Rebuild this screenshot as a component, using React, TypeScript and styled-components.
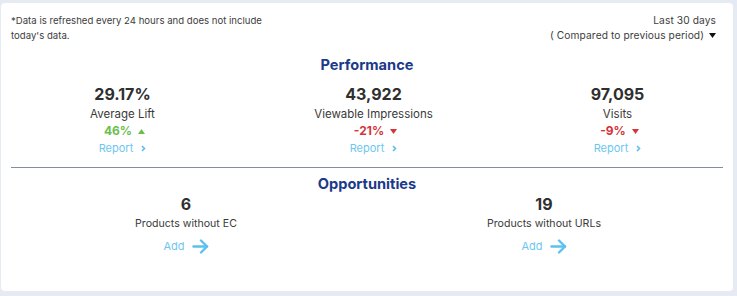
import React from 'react'
import styled, { createGlobalStyle } from 'styled-components'

const GlobalStyle = createGlobalStyle`
  html, body {
    margin: 0;
    padding: 0;
    background: #e6eaf3;
  }
  body {
    font-family: Inter, "Open Sans", sans-serif;
    color: #333;
  }
`

const Page = styled.div`
  padding: 3px 4px 5px 1px;
`

const Card = styled.div`
  background: #fff;
  border-radius: 4px;
  height: 288px;
  box-sizing: border-box;
  padding: 10px 10px 0 10px;
`

const Header = styled.div`
  display: flex;
  justify-content: space-between;
  align-items: flex-start;
  padding-right: 7px;
`

const Note = styled.div`
  font-size: 9.6px;
  line-height: 15px;
  color: #3d3d3d;
  max-width: 280px;
`

const Period = styled.div`
  font-size: 10.2px;
  line-height: 15px;
  color: #3d3d3d;
  text-align: right;
  letter-spacing: 0.1px;
`

const PeriodLine = styled.div`
  display: flex;
  justify-content: flex-end;
  align-items: center;
  gap: 5px;
`

const SectionTitle = styled.div<{ $top: number }>`
  margin-top: ${({ $top }) => $top}px;
  text-align: center;
  font-size: 14.6px;
  line-height: 20px;
  font-weight: 700;
  color: #1b3a88;
`

const Metrics = styled.div<{ $cols: string; $shift: number }>`
  display: grid;
  grid-template-columns: ${({ $cols }) => $cols};
  margin-left: ${({ $shift }) => $shift}px;
`

const Metric = styled.div`
  display: flex;
  flex-direction: column;
  align-items: center;
  text-align: center;
`

const Value = styled.div<{ $top: number }>`
  margin-top: ${({ $top }) => $top}px;
  font-size: 16px;
  line-height: 20px;
  font-weight: 700;
  color: #2f2f2f;
`

const Label = styled.div<{ $size: number; $lh: number; $top: number }>`
  margin-top: ${({ $top }) => $top}px;
  font-size: ${({ $size }) => $size}px;
  line-height: ${({ $lh }) => $lh}px;
  color: #3a3a3a;
  white-space: nowrap;
`

const Change = styled.div<{ $up: boolean }>`
  margin-top: 1px;
  display: flex;
  align-items: center;
  gap: 6px;
  font-size: 12px;
  line-height: 16px;
  font-weight: 700;
  color: ${({ $up }) => ($up ? '#69bf4c' : '#d5343d')};
  padding-left: 4px;
`

const LinkRow = styled.div<{ $gap: number; $lh: number; $top: number }>`
  margin-top: ${({ $top }) => $top}px;
  display: flex;
  align-items: center;
  gap: ${({ $gap }) => $gap}px;
  font-size: 11px;
  line-height: ${({ $lh }) => $lh}px;
  color: #6ec6f0;
  cursor: pointer;
`

const Divider = styled.hr`
  margin: 11px 0 0 0;
  border: none;
  border-top: 1px solid #858d9b;
  height: 0;
`

const Triangle = ({ up, color }: { up: boolean; color: string }) => (
  <svg width="7" height="5" viewBox="0 0 7 5">
    <polygon points={up ? '0,5 7,5 3.5,0' : '0,0 7,0 3.5,5'} fill={color} />
  </svg>
)

const Chevron = () => (
  <svg width="5" height="7" viewBox="0 0 5 7">
    <polyline points="1,1 3.5,3.5 1,6" fill="none" stroke="#5bbfee" strokeWidth="1.6" />
  </svg>
)

const Arrow = () => (
  <svg width="17" height="15" viewBox="0 0 17 15">
    <g fill="none" stroke="#5cc1f0" strokeWidth="2.4" strokeLinecap="round" strokeLinejoin="round">
      <line x1="1.5" y1="7.5" x2="15" y2="7.5" />
      <polyline points="9,1.5 15,7.5 9,13.5" />
    </g>
  </svg>
)

const performance = [
  { value: '29.17%', label: 'Average Lift', change: '46%', up: true },
  { value: '43,922', label: 'Viewable Impressions', change: '-21%', up: false },
  { value: '97,095', label: 'Visits', change: '-9%', up: false },
]

const opportunities = [
  { value: '6', label: 'Products without EC' },
  { value: '19', label: 'Products without URLs' },
]

export default function App() {
  return (
    <Page>
      <GlobalStyle />
      <Card>
        <Header>
          <Note>*Data is refreshed every 24 hours and does not include today's data.</Note>
          <Period>
            <PeriodLine>Last 30 days</PeriodLine>
            <PeriodLine>
              ( Compared to previous period)
              <Triangle up={false} color="#111" />
            </PeriodLine>
          </Period>
        </Header>

        <SectionTitle $top={12}>Performance</SectionTitle>
        <Metrics $cols="243px 259px 229px" $shift={-10}>
          {performance.map((m) => (
            <Metric key={m.label}>
              <Value $top={9}>{m.value}</Value>
              <Label $size={11.5} $lh={16} $top={2}>{m.label}</Label>
              <Change $up={m.up}>
                {m.change}
                <Triangle up={m.up} color={m.up ? '#69bf4c' : '#d5343d'} />
              </Change>
              <LinkRow $gap={8} $lh={16} $top={1}>
                Report
                <Chevron />
              </LinkRow>
            </Metric>
          ))}
        </Metrics>

        <Divider />

        <SectionTitle $top={6}>Opportunities</SectionTitle>
        <Metrics $cols="1fr 1fr" $shift={-4}>
          {opportunities.map((m) => (
            <Metric key={m.label}>
              <Value $top={0}>{m.value}</Value>
              <Label $size={10.6} $lh={14} $top={3}>{m.label}</Label>
              <LinkRow $gap={7} $lh={20} $top={5}>
                Add
                <Arrow />
              </LinkRow>
            </Metric>
          ))}
        </Metrics>
      </Card>
    </Page>
  )
}
